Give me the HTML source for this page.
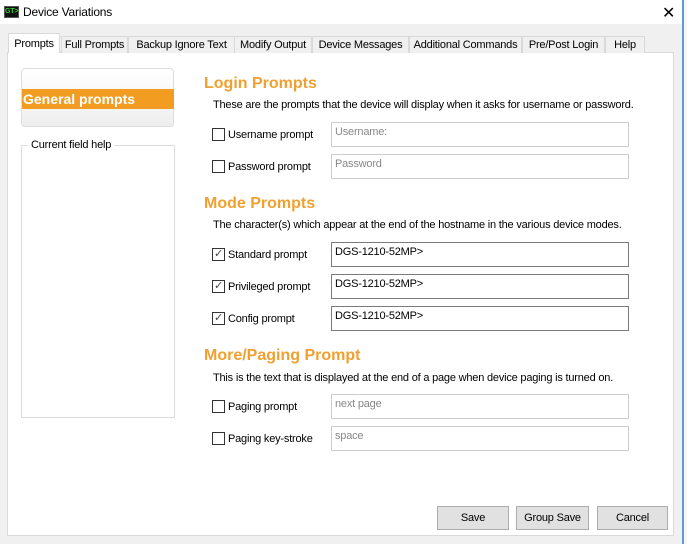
<!DOCTYPE html><html><head><style>
*{box-sizing:border-box}body{margin:0;width:687px;height:544px;background:#f0f0f0;font-family:"Liberation Sans",sans-serif;font-size:11px;color:#000;position:relative;overflow:hidden;letter-spacing:-0.2px}
.a{position:absolute;white-space:nowrap}
.tab{position:absolute;top:36px;height:17px;border:1px solid #d9d9d9;border-bottom:none;background:#f0f0f0;text-align:center;line-height:17px;font-size:11px;white-space:nowrap}
.h{position:absolute;left:204px;color:#f0a030;font-weight:bold;font-size:16px;letter-spacing:0}
.d{position:absolute;left:213px;white-space:nowrap}
.cb{position:absolute;left:212px;width:13px;height:13px;border:1px solid #333;background:#fff;color:#444;font-size:11px;line-height:11px;text-align:center}
.lb{position:absolute;left:228px;white-space:nowrap}
.in{position:absolute;left:331px;width:298px;height:25px;border:1px solid #ccc;background:#fff;color:#888;padding:3px 3px}
.in.e{border-color:#7a7a7a;color:#000}
.btn{position:absolute;top:506px;height:24px;border:1px solid #adadad;background:#e1e1e1;text-align:center;line-height:23px}
</style></head><body>
<div class="a" style="left:0;top:0;width:682px;height:24px;background:#fff"></div>
<div class="a" style="left:4px;top:6px;width:15px;height:12px;background:#111;border:1px solid #555;color:#3c3;font-size:7px;line-height:10px;font-weight:bold">GT&gt;</div>
<div class="a" style="left:23px;top:5px;font-size:12px">Device Variations</div>
<div class="a" style="left:662px;top:3px;font-size:16px;font-weight:300">✕</div>
<div class="a" style="left:682px;top:0;width:2px;height:544px;background:#5b9bd5"></div>
<div class="a" style="left:684px;top:0;width:3px;height:544px;background:#f6f6f6"></div>
<div class="a" style="left:7px;top:52px;width:667px;height:484px;background:#fff;border:1px solid #d9d9d9"></div>
<div class="tab" style="left:8px;top:33px;height:20px;width:52px;background:#fff;line-height:21px">Prompts</div>
<div class="tab" style="left:61px;width:67px">Full Prompts</div>
<div class="tab" style="left:128px;width:107px">Backup Ignore Text</div>
<div class="tab" style="left:234px;width:78px">Modify Output</div>
<div class="tab" style="left:312px;width:97px">Device Messages</div>
<div class="tab" style="left:409px;width:113px">Additional Commands</div>
<div class="tab" style="left:522px;width:83px">Pre/Post Login</div>
<div class="tab" style="left:605px;width:40px">Help</div>
<div class="a" style="left:21px;top:68px;width:153px;height:59px;border:1px solid #ddd;border-radius:4px;background:linear-gradient(#fff,#eee)"></div>
<div class="a" style="left:22px;top:89px;width:152px;height:20px;background:#f29d22;color:#fff;font-weight:bold;font-size:14px;line-height:20px;padding-left:1px;letter-spacing:0">General prompts</div>
<div class="a" style="left:21px;top:145px;width:154px;height:273px;border:1px solid #ddd"></div>
<div class="a" style="left:28px;top:139px;background:#fff;padding:0 3px">Current field help</div>

<div class="h" style="top:75px">Login Prompts</div>
<div class="d" style="top:99px">These are the prompts that the device will display when it asks for username or password.</div>
<div class="cb" style="top:128px"></div><div class="lb" style="top:129px">Username prompt</div>
<div class="in" style="top:122px">Username:</div>
<div class="cb" style="top:160px"></div><div class="lb" style="top:161px">Password prompt</div>
<div class="in" style="top:154px">Password</div>

<div class="h" style="top:195px">Mode Prompts</div>
<div class="d" style="top:219px">The character(s) which appear at the end of the hostname in the various device modes.</div>
<div class="cb" style="top:248px">✓</div><div class="lb" style="top:249px">Standard prompt</div>
<div class="in e" style="top:242px">DGS-1210-52MP&gt;</div>
<div class="cb" style="top:280px">✓</div><div class="lb" style="top:281px">Privileged prompt</div>
<div class="in e" style="top:274px">DGS-1210-52MP&gt;</div>
<div class="cb" style="top:312px">✓</div><div class="lb" style="top:313px">Config prompt</div>
<div class="in e" style="top:306px">DGS-1210-52MP&gt;</div>

<div class="h" style="top:347px">More/Paging Prompt</div>
<div class="d" style="top:372px">This is the text that is displayed at the end of a page when device paging is turned on.</div>
<div class="cb" style="top:400px"></div><div class="lb" style="top:401px">Paging prompt</div>
<div class="in" style="top:394px">next page</div>
<div class="cb" style="top:432px"></div><div class="lb" style="top:433px">Paging key-stroke</div>
<div class="in" style="top:426px">space</div>

<div class="btn" style="left:437px;width:72px">Save</div>
<div class="btn" style="left:516px;width:73px">Group Save</div>
<div class="btn" style="left:597px;width:71px">Cancel</div>
</body></html>
